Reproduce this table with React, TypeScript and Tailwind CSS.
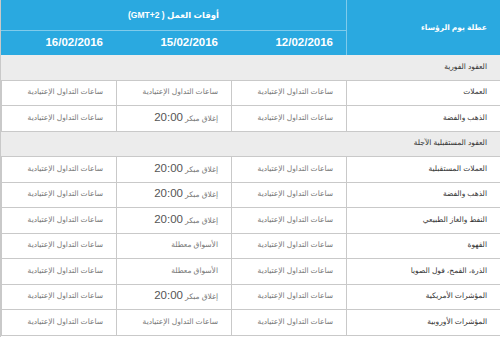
import React from "react";

const NORMAL = "ساعات التداول الإعتيادية";
const EARLY = "إغلاق مبكر 20:00";
const CLOSED = "الأسواق معطلة";

type Row = { label: string; cells: [string, string, string] };

const spot: Row[] = [
  { label: "العملات", cells: [NORMAL, NORMAL, NORMAL] },
  { label: "الذهب والفضة", cells: [NORMAL, EARLY, NORMAL] },
];

const futures: Row[] = [
  { label: "العملات المستقبلية", cells: [NORMAL, EARLY, NORMAL] },
  { label: "الذهب والفضة", cells: [NORMAL, EARLY, NORMAL] },
  { label: "النفط والغاز الطبيعي", cells: [NORMAL, EARLY, NORMAL] },
  { label: "القهوة", cells: [NORMAL, CLOSED, NORMAL] },
  { label: "الذرة، القمح، فول الصويا", cells: [NORMAL, CLOSED, NORMAL] },
  { label: "المؤشرات الأمريكية", cells: [NORMAL, EARLY, NORMAL] },
  { label: "المؤشرات الأوروبية", cells: [NORMAL, NORMAL, NORMAL] },
];

const Cell: React.FC<{ text: string }> = ({ text }) => {
  const early = text === EARLY;
  return (
    <div className="flex w-[115px] items-center whitespace-nowrap border-l border-[#c9c9c9] px-[13px] pb-[2px] text-[7.5px] text-[#777]">
      {early ? (
        <span>
          إغلاق مبكر <span className="text-[11.5px] text-[#555]">20:00</span>
        </span>
      ) : (
        text
      )}
    </div>
  );
};

const DataRow: React.FC<{ row: Row }> = ({ row }) => (
  <div className="flex h-[25.5px] border-b border-[#c9c9c9] bg-white">
    <div className="flex w-[154px] items-center whitespace-nowrap border-l border-[#c9c9c9] px-[13px] pb-[2px] text-[7.5px] text-[#333]">
      {row.label}
    </div>
    {row.cells.map((c, i) => (
      <Cell key={i} text={c} />
    ))}
  </div>
);

const Section: React.FC<{ title: string }> = ({ title }) => (
  <div className="flex h-[25.5px] items-center whitespace-nowrap border-b border-[#c9c9c9] bg-[#ececec] px-[13px] pb-[2px] text-[7.5px] text-[#333]">
    {title}
  </div>
);

export default function App() {
  return (
    <div
      dir="rtl"
      className="h-[337px] w-[500px] overflow-hidden border-l border-[#c9c9c9] bg-white"
      style={{ fontFamily: '"Liberation Sans", "DejaVu Sans", sans-serif' }}
    >
      {/* header */}
      <div className="flex h-[55px] bg-[#2aa9e0] text-white">
        <div className="flex w-[154px] items-center whitespace-nowrap border-l border-[#7fcbeb] px-[13px] text-[7.5px] font-bold">
          عطلة يوم الرؤساء
        </div>
        <div className="flex flex-1 flex-col">
          <div className="flex h-[31px] items-center justify-center whitespace-nowrap border-b border-[#7fcbeb] text-[8.5px] font-bold">
            أوقات العمل ( GMT+2)
          </div>
          <div className="flex flex-1 text-[11.5px] font-bold">
            <div className="flex w-[115px] items-center px-[13px]">12/02/2016</div>
            <div className="flex w-[115px] items-center px-[13px]">15/02/2016</div>
            <div className="flex w-[115px] items-center px-[13px]">16/02/2016</div>
          </div>
        </div>
      </div>

      <Section title="العقود الفورية" />
      {spot.map((r, i) => (
        <DataRow key={i} row={r} />
      ))}
      <Section title="العقود المستقبلية الآجلة" />
      {futures.map((r, i) => (
        <DataRow key={i} row={r} />
      ))}
    </div>
  );
}
